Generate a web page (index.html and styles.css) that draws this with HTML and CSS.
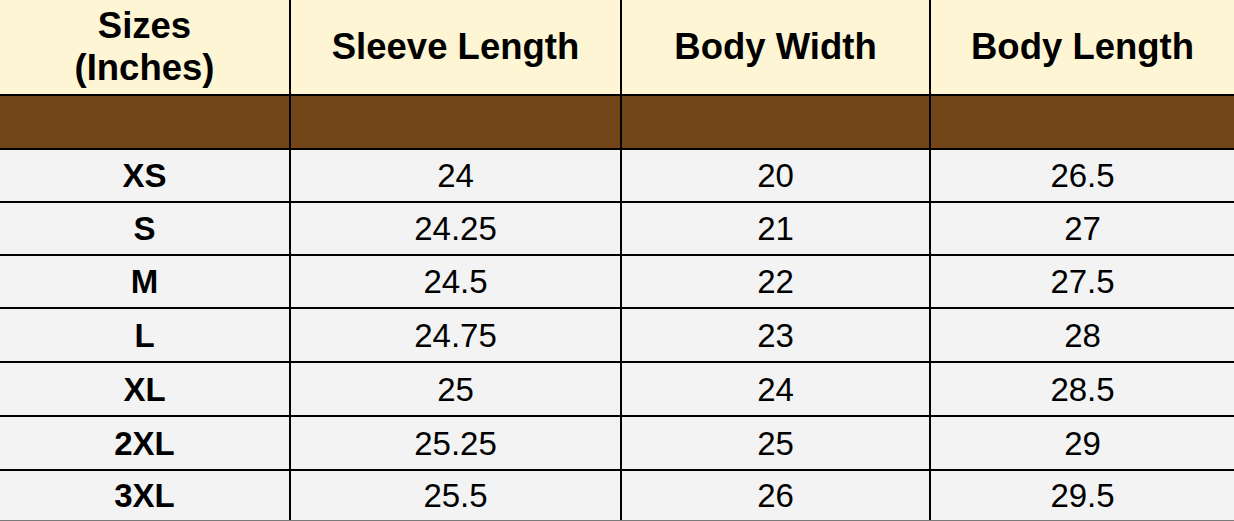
FILE: index.html
```html
<!DOCTYPE html>
<html>
<head>
<meta charset="utf-8">
<link rel="stylesheet" href="styles.css">
</head>
<body>
<div class="chart">
  <div class="cell head two">Sizes<br>(Inches)</div>
  <div class="cell head">Sleeve Length</div>
  <div class="cell head">Body Width</div>
  <div class="cell head">Body Length</div>

  <div class="cell band"></div>
  <div class="cell band"></div>
  <div class="cell band"></div>
  <div class="cell band"></div>

  <div class="cell size">XS</div><div class="cell">24</div><div class="cell">20</div><div class="cell">26.5</div>
  <div class="cell size">S</div><div class="cell">24.25</div><div class="cell">21</div><div class="cell">27</div>
  <div class="cell size">M</div><div class="cell">24.5</div><div class="cell">22</div><div class="cell">27.5</div>
  <div class="cell size">L</div><div class="cell">24.75</div><div class="cell">23</div><div class="cell">28</div>
  <div class="cell size">XL</div><div class="cell">25</div><div class="cell">24</div><div class="cell">28.5</div>
  <div class="cell size">2XL</div><div class="cell">25.25</div><div class="cell">25</div><div class="cell">29</div>
  <div class="cell size">3XL</div><div class="cell">25.5</div><div class="cell">26</div><div class="cell">29.5</div>
</div>
</body>
</html>
```
FILE: styles.css
```css
html, body {
  margin: 0;
  padding: 0;
  background: #f3f3f3;
}

.chart {
  display: grid;
  grid-template-columns: 289px 329px 307px 303px;
  grid-template-rows: 94px 52px 51px 51px 51px 52px 52px 52px 49px;
  gap: 2px;
  background: #000;
  width: 1234px;
  border-bottom: 1px solid #7a7a7a;
  font-family: "Liberation Sans", Arial, sans-serif;
  color: #000;
}

.cell {
  background: #f3f3f3;
  display: flex;
  align-items: center;
  justify-content: center;
  text-align: center;
  font-size: 33px;
  padding-top: 1px;
}

.head {
  background: #fdf5d3;
  font-weight: bold;
  font-size: 36.5px;
  line-height: 42px;
  padding-top: 0;
}

.band {
  background: #724519;
}

.size {
  font-weight: bold;
}
```
